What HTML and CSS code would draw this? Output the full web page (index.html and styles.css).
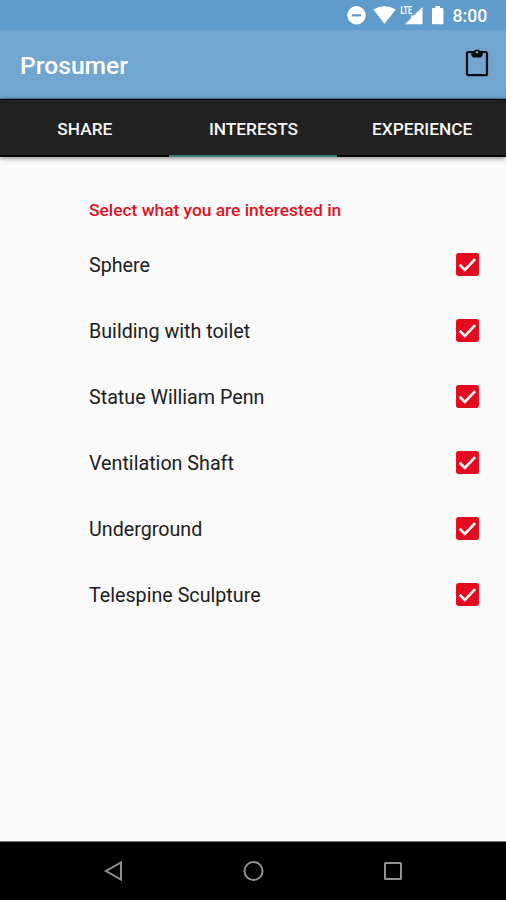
FILE: index.html
```html
<!DOCTYPE html>
<html lang="en">
<head>
<meta charset="utf-8">
<title>Prosumer</title>
<link rel="stylesheet" href="styles.css">
</head>
<body>
<div class="status">
  <svg class="status-icons" viewBox="0 0 100 30" aria-hidden="true">
    <circle cx="9.5" cy="15.3" r="9.2"/>
    <path class="minus" d="M5 15.3h9"/>
    <path d="M26.3 9.5Q37.5 2.8 48.800 9.500L37.500 23.800Z"/>
    <path d="M75.500 7v17.300H58L64.200 18V15.500H66.700Z"/>
    <text x="53.500" y="14" textLength="11.500" lengthAdjust="spacingAndGlyphs">LTE</text>
    <path d="M88.500 6h4.500v2h2.200q1.200 0 1.200 1.200v13.900q0 1.200-1.200 1.200h-9q-1.200 0-1.200-1.200V9.200Q85 8 86.200 8h2.300z"/>
  </svg>
  <span class="clock">8:00</span>
</div>
<header class="appbar">
  <h1>Prosumer</h1>
  <svg class="clipboard" viewBox="0 0 24 30" aria-hidden="true">
    <rect x="2" y="4" width="20" height="23.200" rx="1.500"/>
    <path d="M6.300 3.800H8.800C9.600 .6 14.400 .6 15.200 3.800H17.700V7.200L16 9.500H8L6.300 7.200Z"/>
    <circle cx="12" cy="4.200" r="1.200"/>
  </svg>
</header>
<nav class="tabs">
  <div class="tab">SHARE</div>
  <div class="tab active">INTERESTS</div>
  <div class="tab">EXPERIENCE</div>
</nav>
<main>
  <h2>Select what you are interested in</h2>
  <ul>
    <li><span>Sphere</span><svg class="check" viewBox="0 0 24 24"><rect x="1" y="1" width="22" height="22" rx="2.500"/><path d="M4.500 12.200l5 5L19.300 6.900"/></svg></li>
    <li><span>Building with toilet</span><svg class="check" viewBox="0 0 24 24"><rect x="1" y="1" width="22" height="22" rx="2.500"/><path d="M4.500 12.200l5 5L19.300 6.900"/></svg></li>
    <li><span>Statue William Penn</span><svg class="check" viewBox="0 0 24 24"><rect x="1" y="1" width="22" height="22" rx="2.500"/><path d="M4.500 12.200l5 5L19.300 6.900"/></svg></li>
    <li><span>Ventilation Shaft</span><svg class="check" viewBox="0 0 24 24"><rect x="1" y="1" width="22" height="22" rx="2.500"/><path d="M4.500 12.200l5 5L19.300 6.900"/></svg></li>
    <li><span>Underground</span><svg class="check" viewBox="0 0 24 24"><rect x="1" y="1" width="22" height="22" rx="2.500"/><path d="M4.500 12.200l5 5L19.300 6.900"/></svg></li>
    <li><span>Telespine Sculpture</span><svg class="check" viewBox="0 0 24 24"><rect x="1" y="1" width="22" height="22" rx="2.500"/><path d="M4.500 12.200l5 5L19.300 6.900"/></svg></li>
  </ul>
</main>
<footer class="navbar">
  <svg viewBox="0 0 24 24"><path d="M20 3.500v17L5 12Z"/></svg>
  <svg viewBox="0 0 24 24"><circle cx="12.500" cy="12" r="9"/></svg>
  <svg viewBox="0 0 24 24"><rect x="4" y="4" width="16" height="16" rx=".5"/></svg>
</footer>
</body>
</html>
```
FILE: styles.css
```css
* { box-sizing: border-box; margin: 0; padding: 0; }
body {
  display: flex;
  flex-direction: column;
  height: 900px;
  background: #fafafa;
  font-family: Roboto, sans-serif;
}
svg { display: block; flex: none; }
.status {
  display: flex;
  height: 30px;
  padding-left: 347px;
  background: #5f9ccb;
  color: #fff;
}
.status-icons { width: 100px; height: 30px; fill: #fff; }
.status-icons .minus { stroke: #5f9ccb; stroke-width: 2.2; }
.status-icons text { font-size: 10.5px; font-weight: 700; }
.clock {
  margin-left: 5.500px;
  font-size: 17.7px;
  font-weight: 500;
  line-height: 33px;
}
.appbar {
  display: flex;
  justify-content: space-between;
  height: 69px;
  padding: 18px 17px 0 20px;
  background: #72a6d0;
  border-bottom: 1px solid #5480a6;
}
.appbar h1 {
  color: #fff;
  font-size: 24.7px;
  font-weight: 500;
  line-height: 35px;
}
.clipboard { width: 24px; height: 30px; fill: #080b0e; }
.clipboard rect { fill: none; stroke: #080b0e; stroke-width: 2.2; }
.clipboard circle { fill: #72a6d0; }
.tabs {
  display: grid;
  grid-template-columns: repeat(3, 1fr);
  height: 58px;
  background: #212121;
  border-top: 1px solid #080808;
  box-shadow: 0 1px 5px rgba(0, 0, 0, .5);
}
.tab {
  display: flex;
  align-items: center;
  justify-content: center;
  height: 57px;
  padding: 3px 0 0 1px;
  border-bottom: 2px solid #050505;
  color: #f5f5f5;
  font-size: 17.3px;
  font-weight: 500;
  line-height: 24px;
}
.tab.active { border-bottom-color: #35827b; }
main { flex: 1; padding: 41px 26px 0 89px; }
h2 {
  height: 24px;
  color: #e01224;
  font-size: 17.35px;
  font-weight: 500;
  line-height: 24px;
  white-space: nowrap;
}
ul { list-style: none; padding-top: 10px; }
li {
  display: flex;
  align-items: center;
  justify-content: space-between;
  height: 66px;
  color: #202020;
  font-size: 19.7px;
  font-weight: 400;
  white-space: nowrap;
}
.check { width: 25px; height: 25px; margin-top: -2px; fill: #e30b1d; }
.check path { fill: none; stroke: #fff; stroke-width: 2.5; }
.navbar {
  display: flex;
  justify-content: space-between;
  height: 59px;
  padding: 17px 101px 0 101px;
  background: #000;
  border-top: 1px solid #777;
}
.navbar svg { width: 24px; height: 24px; fill: none; stroke: #919191; stroke-width: 2; }
```
